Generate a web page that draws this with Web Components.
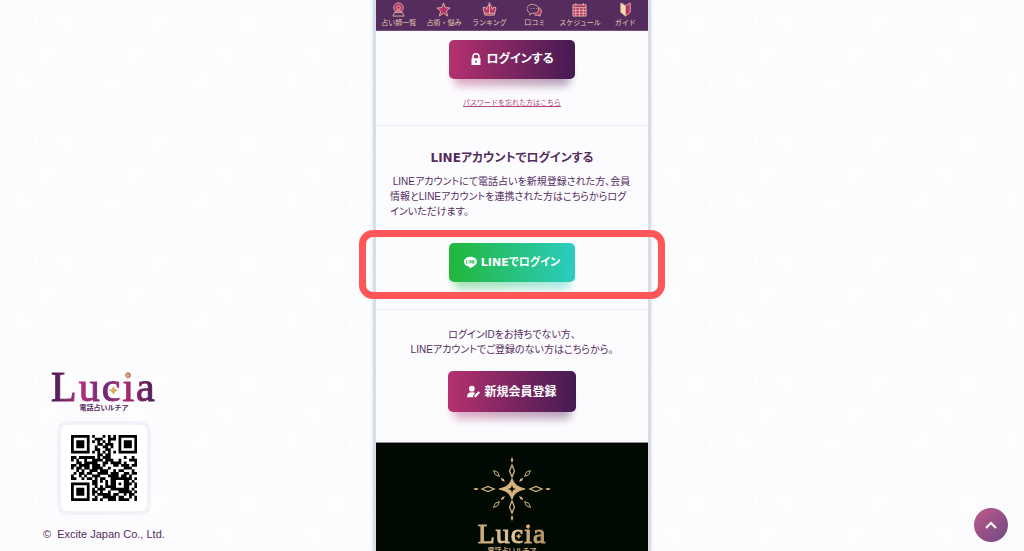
<!DOCTYPE html>
<html lang="ja">
<head>
<meta charset="utf-8">
<meta name="viewport" content="width=device-width, initial-scale=1">
<title>電話占いルチア ログイン</title>
<style>
html,body{margin:0;height:100%}
body{
  --plum:#552c5e;--gold:#c9a677;--line:#eceef4;
  color:var(--plum);
  font-family:"Liberation Sans","Noto Sans CJK JP",sans-serif;
  font-size:10px;line-height:15px;
}
</style>
</head>
<body>
<lucia-page>
  <lucia-brand slot="left"></lucia-brand>
  <lucia-nav slot="main"></lucia-nav>
  <lucia-section slot="main" class="login" kind="login">
    <lucia-button icon="lock">ログインする</lucia-button>
    <lucia-link>パスワードを忘れた方はこちら</lucia-link>
  </lucia-section>
  <lucia-section slot="main" kind="line">
    <span slot="heading">LINEアカウントでログインする</span>
    <span slot="lead">&nbsp;LINEアカウントにて電話占いを新規登録された方、会員<br>情報とLINEアカウントを連携された方はこちらからログ<br>インいただけます。</span>
    <lucia-highlight><lucia-button icon="line" tone="green">LINEでログイン</lucia-button></lucia-highlight>
  </lucia-section>
  <lucia-section slot="main" kind="register">
    <span>ログインIDをお持ちでない方、<br>LINEアカウントでご登録のない方はこちらから。</span>
    <lucia-button icon="user" size="large">新規会員登録</lucia-button>
  </lucia-section>
  <lucia-footer slot="main"></lucia-footer>
  <lucia-top slot="right"></lucia-top>
</lucia-page>

<script>
function define(name, css, markup) {
  customElements.define(name, class extends HTMLElement {
    constructor() {
      super();
      const root = this.attachShadow({ mode: 'open' });
      const body = typeof markup === 'function' ? markup(this) : markup;
      root.innerHTML = `<style>${css}</style>${body}`;
    }
  });
}

define('lucia-page', `
:host{
  display:grid;grid-template-columns:minmax(0,1fr) minmax(0,272px) minmax(0,1fr);grid-template-rows:minmax(0,1fr);height:100vh;overflow:hidden;
  --dot:rgba(255,255,255,.8);
  background-color:#fcfcfe;
  background-image:
    radial-gradient(circle at 22px 23px,transparent 12px,var(--dot) 14px,transparent 16px),
    radial-gradient(circle at 67px 83px,transparent 12px,var(--dot) 14px,transparent 16px),
    radial-gradient(circle at 67px 23px,var(--dot) 1px,transparent 14px),
    radial-gradient(circle at 22px 83px,var(--dot) 1px,transparent 14px),
    radial-gradient(circle at 45px 53px,var(--dot) 1px,transparent 14px);
  background-size:90px 120px;
}
aside{display:flex;align-items:flex-end;min-width:0}
.right{justify-content:flex-end;padding:0 16px 9px 0}
.left{padding:0 0 9px 43px}
main{background:#fcfcfe;box-shadow:0 0 0 1px #d9e0ea,0 0 4px 2px #b4c0d0;min-width:0}
`, `<aside class="left"><slot name="left"></slot></aside>
<main><slot name="main"></slot></main>
<aside class="right"><slot name="right"></slot></aside>`);

/* --- navigation --- */
const navItems = [
  ['占い師一覧', '<circle cx="8" cy="6" r="5" fill="#b5316f"/><circle cx="8" cy="6" r="2"/><path d="M5 11c0-3 6-3 6 0M4 11h8l2 4H2z"/>'],
  ['占術・悩み', '<path fill="#b5316f" d="M8 1l2 5 5 .4-4 3.300 1.400 5.300L8 12l-4.400 3L5 9.700 1 6.400 6 6z"/>'],
  ['ランキング', '<path fill="#b5316f" d="M3 14L1 6q3-2 4 2 0-4 3-5 3 1 3 5 1-4 4-2l-2 8z"/><path d="M3 12h10M8 3v9"/><circle cx="8" cy="2" r="1"/>'],
  ['口コミ', '<path fill="#b5316f" d="M13 6c3 2 3 6 1 7v2l-3-1H8"/><path fill="#552c5e" d="M3 12c-7-6 0-11 5-9 6 1 6 9 0 9H5l-2 2z"/><path d="M4 7h1M7 7h1M10 7h1"/>'],
  ['スケジュール', '<path fill="#b5316f" d="M1 3h14v12H1z"/><path d="M1 6h14M1 9h14M1 12h14M4 6v9M8 6v9M12 6v9M4 1v3M12 1v3"/>'],
  ['ガイド', '<path fill="#f0dcae" d="M3 1l5 3v11l-5-4z"/><path fill="#b5316f" d="M13 1L8 4v11l5-4z"/>']
];
define('lucia-nav', `
:host{display:block;background:#552c5e;border-bottom:1px solid #76507e}
nav{display:grid;grid-template-columns:repeat(6,1fr)}
a{display:flex;flex-direction:column;align-items:center;height:30px;padding-top:2px;box-sizing:border-box;color:#e6cbb0;text-decoration:none;font-size:7px;line-height:10px;white-space:nowrap;gap:1px}
svg{width:15px;height:15px;fill:none;stroke:#dfb49a;stroke-width:1;flex:none}
`, '<nav aria-label="メニュー">' + navItems.map(([t, p]) =>
  `<a href="#"><svg viewBox="0 0 16 16" aria-hidden="true">${p}</svg><span>${t}</span></a>`).join('') + '</nav>');

/* --- content blocks --- */
define('lucia-section', `
:host{display:flex;flex-direction:column;align-items:center;border-bottom:1px solid var(--line)}
:host([kind=login]){padding:9px 0 15px;gap:16px}
:host([kind=line]){padding:24px 0 10px}
:host([kind=register]){padding:17px 0 30px;gap:14px;text-align:center;border-bottom-color:#8c8c94;font-feature-settings:"palt"}
h2{margin:0 0 8px;font:bold 12px/16px "DejaVu Sans","Noto Sans CJK JP",sans-serif;font-feature-settings:"palt"}
p{margin:0 0 11px;padding:0 14px;width:100%;box-sizing:border-box;font-feature-settings:"palt";white-space:nowrap}
`, el => el.getAttribute('kind') === 'line'
  ? '<h2><slot name="heading"></slot></h2><p><slot name="lead"></slot></p><slot></slot>'
  : '<slot></slot>');

define('lucia-highlight', `
:host{display:flex;justify-content:center;position:relative;align-self:stretch;padding:13px 0 17px}
:host::after{content:"";position:absolute;inset:0 -17px;border:7px solid #ff5757;border-radius:14px;pointer-events:none}
`, '<slot></slot>');

const icons = {
  lock: '<path d="M3 7V5a5 5 0 0 1 10 0v2h1v9H2V7zM5 7h6V5a3 3 0 0 0-6 0zM7 10v3h2v-3z" fill-rule="evenodd"/>',
  line: '<path d="M8 1C3.500 1 0 3.800 0 7.200c0 3 2.700 5.400 6.500 6 .8.200.5 1.200.5 2.200 2.800-1.200 9-4.600 9-8.200C16 3.800 12.500 1 8 1z"/><path d="M3 5v4h1.600M6.300 5v4M8 9V5l2.200 4V5M13 5h-1.500v4H13M11.500 7H13" fill="none" stroke="#24b84b" stroke-width=".9"/>',
  user: '<circle cx="6" cy="4.500" r="3.500"/><path d="M0 15c0-4 2-6 6-6 2 0 3.200.5 4 1.300L7.500 13v2zM9 15v-2.200l5.200-5L16 9.600 11 15z"/>'
};
define('lucia-button', `
:host{display:block;position:relative;z-index:0}
button{display:flex;align-items:center;justify-content:center;gap:4px;width:126px;height:39px;padding:0 0 2px;border:0;border-radius:5px;
  background:linear-gradient(90deg,#b5316f,#451a52);color:#fff;cursor:pointer;position:relative;
  font:bold 12px/18px "DejaVu Sans","Noto Sans CJK JP",sans-serif;font-feature-settings:"palt"}
button::before{content:"";position:absolute;z-index:-1;inset:20px 5px -7px;border-radius:5px;background:inherit;filter:blur(4px);opacity:.4}
:host([tone=green]) button{background:linear-gradient(90deg,#22b63a,#2bcdc0);font-size:11px;padding:0}
:host([size=large]) button{width:128px;height:41px;padding:0}
svg{width:12px;height:12px;fill:#fff;flex:none}
:host([icon=line]) svg{width:13px;height:13px}
:host([icon=user]) svg{width:13px;height:13px}
`, el => `<button type="button"><svg viewBox="0 0 16 16" aria-hidden="true">${icons[el.getAttribute('icon')]}</svg><span><slot></slot></span></button>`);

define('lucia-link', `
:host{display:block;font-size:7px;line-height:15px}
a{color:#b5477d;text-decoration:underline}
`, '<a href="#"><slot></slot></a>');

/* --- brand column --- */
const qrRows = [
  '1111111.1...1.1.1.1111111',
  '1.....1..111..111.1.....1',
  '1.111.1.1.1.1.1...1.111.1',
  '1.111.1...11.111..1.111.1',
  '1.111.1..1..11.1..1.111.1',
  '1.....1..11..11...1.....1',
  '1111111.1.1.1.1.1.1111111',
  '..........11.11..........',
  '11.111111.1.111.....1..1.',
  '1.1..1..1111.111..1...111',
  '..11.11111..11.1111.1...1',
  '11.1111.111.1...11.111.11',
  '1.11.11.1111..1.....111..',
  '..1.1..111.111..1.11...1.',
  '.1.11.11..1111.111..11.11',
  '1..1.1..111...1111.11.1..',
  '11..1.11.1.11..11111111.1',
  '........11.1.1.11...11.1.',
  '1111111.11...1.11.1.111.1',
  '1.....1..1.1.1111...11..1',
  '1.111.1.1.111..1111111.1.',
  '1.111.1.11.1..1...11111.1',
  '1.111.1.1.11111.11..1.11.',
  '1.....1..1..11111.11..1.1',
  '1111111.11.1..111.1111..1'
];
define('lucia-qr', `
:host{display:block;padding:10px;background:#fff;border:4px solid #f0f3f8;border-radius:10px}
svg{display:block;width:66px;height:66px;fill:#000}
`, () => '<svg viewBox="0 0 25 25" role="img" aria-label="QRコード"><path d="' +
  qrRows.map((r, y) => r.replace(/1+/g, (run, x) => '#'.repeat(run.length)).split('').map((c, x) => c === '#' ? `M${x} ${y}h1.050v1.050h-1.050z` : '').join('')).join('') + '"/></svg>');

define('lucia-logo', `
:host{display:flex;flex-direction:column;align-items:center;font-family:"Liberation Serif",serif}
.word{position:relative;font-size:42px;line-height:32px;letter-spacing:2px}
.ink{color:transparent;-webkit-text-stroke:1px transparent;
  background:linear-gradient(90deg,#3f1b55,#b32f72 28%,#6b2a75 50%,#b32f72 68%,#3f1b55);background-clip:text;-webkit-background-clip:text}
svg{position:absolute;inset:0;width:100%;height:100%;fill:#d8ab5f}
small{font:bold 7px/8px "Noto Sans CJK JP",sans-serif}
:host([tone=gold]) .word{font-size:28px;line-height:24px;letter-spacing:1px}
:host([tone=gold]) .ink{background-image:linear-gradient(90deg,#c9a677,#e4c79c,#b48f60)}
:host([tone=gold]) small{color:var(--gold)}
`, `<span class="word"><span class="ink">Lucia</span><svg viewBox="0 0 104 32" aria-hidden="true"><path d="M62 15l1 3 3 1-3 2-1 3-2-3-3-2 3-1zM76 0l1 3 2 1-2 2-1 3-1-3-2-2 2-1z"/></svg></span><small>電話占いルチア</small>`);

define('lucia-brand', `
:host{display:flex;flex-direction:column;align-items:center}
lucia-qr{margin:10px 0 11px}
small{font-size:11px;line-height:16px;white-space:pre}
`, '<lucia-logo></lucia-logo><lucia-qr></lucia-qr><small>©  Excite Japan Co., Ltd.</small>');

/* --- footer --- */
const tall = 'M0-6L2.500 0 0 6-2.500 0z';
const dot = 'M0-3L1.300 0 0 3-1.300 0z';
const rays = [0, 90, 180, 270].map(a => {
  const side = a % 180 ? 1 : 0;
  return `<g transform="rotate(${a})"><path class="o" transform="translate(0 ${side ? -24 : -18})" d="${tall}"/><path transform="translate(0 ${side ? -36 : -29})" d="${dot}"/></g>
  <g transform="rotate(${a + 45})"><path class="o" transform="translate(0 -22) scale(.7)" d="${tall}"/><path transform="translate(0 -13)" d="${dot}"/></g>`;
}).join('');
define('lucia-footer', `
:host{display:flex;flex-direction:column;align-items:center;background:#000a02;padding:13px 0 24px}
.burst{display:block;width:80px;height:66px;fill:#d8b27c}
.o{fill:none;stroke:#d8b27c;stroke-width:1.300}
`, `<svg class="burst" viewBox="-40 -33 80 66" aria-hidden="true">${rays}<path d="M0-10Q2-2 13 0 2 2 0 10-2 2-13 0-2-2 0-10z" stroke="#d8b27c" stroke-width="1.200"/><path d="M0-4L1-1 4 0 1 1 0 4-1 1-4 0-1-1z" fill="#000a02"/></svg><lucia-logo tone="gold"></lucia-logo>`);

define('lucia-top', `
:host{display:block}
button{display:grid;place-items:center;width:34px;height:34px;padding:0;border:0;border-radius:50%;background:linear-gradient(135deg,#c0588c,#6d4a80);cursor:pointer}
svg{width:12px;height:8px;fill:none;stroke:#fff;stroke-width:2}
`, '<button type="button" aria-label="ページの先頭へ"><svg viewBox="0 0 12 8"><path d="M1 7l5-5 5 5"/></svg></button>');
</script>
</body>
</html>
